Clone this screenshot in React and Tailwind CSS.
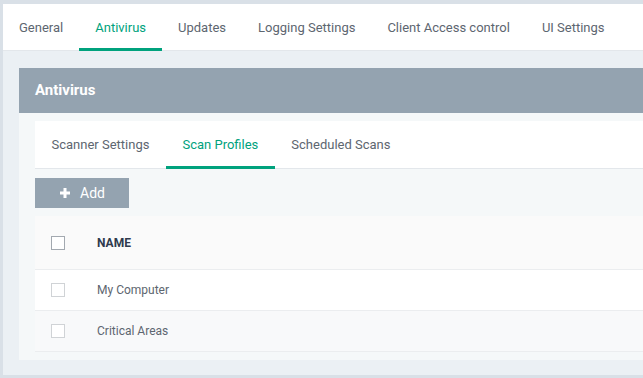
const topTabs = ['General', 'Antivirus', 'Updates', 'Logging Settings', 'Client Access control', 'UI Settings'];
const subTabs = ['Scanner Settings', 'Scan Profiles', 'Scheduled Scans'];
const profiles = ['My Computer', 'Critical Areas'];

function Checkbox({ dark }) {
  return (
    <span
      className={`block w-[14px] h-[14px] bg-white border ${dark ? 'border-[#a3a9b0]' : 'border-[#d0d3d6]'}`}
    />
  );
}

export default function App() {
  return (
    <div className="w-[643px] h-[378px] overflow-hidden bg-[#d9e0e7] pt-[4px] pl-[3px] font-['Roboto',sans-serif]">
      <div className="w-[700px] h-[371px] bg-[#ebf0f4] flex flex-col">
        {/* Top tabs */}
        <div className="h-[47px] bg-white border-b border-[#e3e7eb] flex shrink-0">
          {topTabs.map((t) => (
            <div
              key={t}
              className={`px-4 flex items-center text-[13px] border-b-[3px] mb-[-1px] pt-[3px] ${
                t === 'Antivirus' ? 'border-[#00a27d] text-[#00a27d]' : 'border-transparent text-[#5d6670]'
              }`}
            >
              {t}
            </div>
          ))}
        </div>

        {/* Panel */}
        <div className="pl-4 pt-[17px]">
          <div className="h-[45px] bg-[#94a3b0] flex items-center pl-4 text-white font-bold text-[15px]">
            Antivirus
          </div>
          <div className="bg-[#f5f8f9] pl-4 pt-2 pb-2">
            {/* Sub tabs */}
            <div className="h-[48px] bg-white border-b border-[#e3e7eb] flex">
              {subTabs.map((t) => (
                <div
                  key={t}
                  className={`px-[16.5px] flex items-center text-[13px] border-b-[3px] mb-[-1px] pt-[3px] ${
                    t === 'Scan Profiles' ? 'border-[#00a27d] text-[#00a27d]' : 'border-transparent text-[#5d6670]'
                  }`}
                >
                  {t}
                </div>
              ))}
            </div>

            <button className="mt-[9px] w-[94px] h-[30px] bg-[#94a3b0] text-white text-[14px] flex items-center pl-[25px] gap-[10px]">
              <svg width="10" height="10" viewBox="0 0 10 10" className="shrink-0">
                <rect x="3.5" y="0" width="3" height="10" fill="white" />
                <rect x="0" y="3.5" width="10" height="3" fill="white" />
              </svg>
              Add
            </button>

            {/* Table */}
            <div className="mt-2">
              <div className="h-[53px] bg-[#fafafa] flex items-center">
                <div className="w-[62px] pl-4">
                  <Checkbox dark />
                </div>
                <span className="text-[12px] font-bold text-[#2f3a4d]">NAME</span>
              </div>
              {profiles.map((p, i) => (
                <div
                  key={p}
                  className={`h-[41px] border-t border-[#ebedef] flex items-center ${i % 2 ? 'bg-[#f8f9fa]' : 'bg-white'}`}
                >
                  <div className="w-[62px] pl-4">
                    <Checkbox />
                  </div>
                  <span className="text-[12px] text-[#5d6670]">{p}</span>
                </div>
              ))}
              <div className="border-t border-[#ebedef]" />
            </div>
          </div>
        </div>
      </div>
    </div>
  );
}
